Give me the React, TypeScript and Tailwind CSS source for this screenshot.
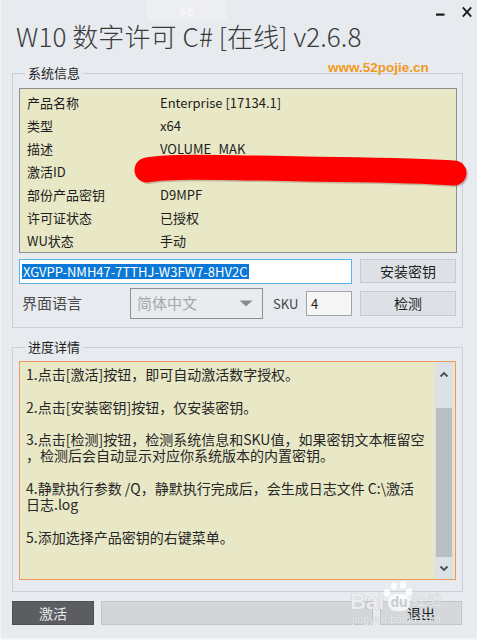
import React from "react";

const infoRows: [string, string][] = [
  ["产品名称", "Enterprise [17134.1]"],
  ["类型", "x64"],
  ["描述", "VOLUME_MAK"],
  ["激活ID", ""],
  ["部份产品密钥", "D9MPF"],
  ["许可证状态", "已授权"],
  ["WU状态", "手动"],
];

const helpLines = [
  "1.点击[激活]按钮，即可自动激活数字授权。",
  "",
  "2.点击[安装密钥]按钮，仅安装密钥。",
  "",
  "3.点击[检测]按钮，检测系统信息和SKU值，如果密钥文本框留空",
  "，检测后会自动显示对应你系统版本的内置密钥。",
  "",
  "4.静默执行参数 /Q，静默执行完成后，会生成日志文件 C:\\激活",
  "日志.log",
  "",
  "5.添加选择产品密钥的右键菜单。",
];

const Chevron = ({ up }: { up?: boolean }) => (
  <svg width="10" height="7" viewBox="0 0 10 7">
    <polyline
      points={up ? "1.5,5.5 5,2 8.5,5.5" : "1.5,1.5 5,5 8.5,1.5"}
      fill="none"
      stroke="#4a4d52"
      strokeWidth="1.8"
    />
  </svg>
);

const GroupBox = ({
  title,
  className,
  children,
}: {
  title: string;
  className?: string;
  children: React.ReactNode;
}) => (
  <fieldset className={`border border-[#ccd0d4] ${className ?? ""}`}>
    <legend className="ml-[6px] px-[3px] text-[13px] leading-[18px] text-[#1e1e1e]">
      {title}
    </legend>
    {children}
  </fieldset>
);

export default function App() {
  return (
    <div className="w-[477px] h-[640px] bg-[#f4f5f7] font-['Noto_Sans_CJK_SC',sans-serif]">
      <div className="relative ml-[1px] w-[476px] h-[638px] bg-[#e7eaee] overflow-hidden">
        {/* window controls */}
        <div className="h-[20px] flex justify-end items-start pr-[5px] gap-[17px]">
          <svg width="9" height="20" viewBox="0 0 9 20">
            <rect x="0" y="13.5" width="8.5" height="2.2" fill="#1a1a1a" />
          </svg>
          <svg width="10" height="20" viewBox="0 0 10 20">
            <path d="M0.8 7.3 L9.2 16.7 M9.2 7.3 L0.8 16.7" stroke="#1a1a1a" strokeWidth="1.8" />
          </svg>
        </div>

        <div className="pl-[11px] pr-[14px]">
          <div className="h-[32px] leading-[32px] ml-[4px] text-[26px] font-light tracking-[0.1px] text-[#3a3a3a] whitespace-nowrap">
            W10 数字许可 C# [在线] v2.6.8
          </div>

          <GroupBox title="系统信息" className="mt-[12px] pl-[6px] pr-[5px] pb-[8px]">
            <div className="mt-[6px] border border-[#8e8e8e] bg-[#e8e8c6] pt-[2px] pl-[7px]">
              {infoRows.map(([k, v]) => (
                <div key={k} className="h-[23px] flex items-center text-[13px] text-[#1c1c1c]">
                  <div className="w-[133px]">{k}</div>
                  <div>{v}</div>
                </div>
              ))}
            </div>

            <div className="mt-[6px] flex items-start gap-[8px]">
              <div className="w-[333px] h-[25px] border border-[#5fb3e6] bg-white flex items-center pl-[2px]">
                <span className="bg-[#0a78d6] text-white text-[13px] leading-[15px] px-[1px]">
                  XGVPP-NMH47-7TTHJ-W3FW7-8HV2C
                </span>
              </div>
              <button className="w-[96px] h-[24px] border border-[#c6cacf] bg-[#dde1e6] text-[14px] text-[#1e1e1e] flex items-center justify-center">
                安装密钥
              </button>
            </div>

            <div className="mt-[4px] h-[31px] flex items-center">
              <div className="w-[111px] pl-[3px] text-[15px] text-[#4a4a4a]">界面语言</div>
              <div className="w-[133px] h-[31px] border border-[#8f8f8f] bg-[#e9ecef] flex items-center justify-between pl-[6px] pr-[9px]">
                <span className="text-[15px] text-[#a6a6a6]">简体中文</span>
                <svg width="14" height="7" viewBox="0 0 14 7">
                  <polygon points="0.5,0.5 13.5,0.5 7,6.5" fill="#8a8b8d" />
                </svg>
              </div>
              <div className="w-[43px] pl-[10px] text-[13px] text-[#444]">SKU</div>
              <div className="w-[46px] h-[25px] border border-[#a3a3a3] bg-[#f6f6f6] flex items-center pl-[4px] text-[13px] text-[#1e1e1e]">
                4
              </div>
              <button className="ml-[8px] w-[96px] h-[25px] border border-[#c6cacf] bg-[#dde1e6] text-[14px] text-[#1e1e1e] flex items-center justify-center">
                检测
              </button>
            </div>
          </GroupBox>

          <GroupBox title="进度详情" className="mt-[10px] pl-[6px] pr-[6px] pb-[11px]">
            <div className="mt-[5px] h-[219px] border border-[#ee9a5e] bg-[#e8e8c6] flex">
              <div className="flex-1 pl-[6px] pt-[4px] text-[14px] leading-[16.3px] text-[#262626] whitespace-pre">
                {helpLines.map((l, i) => (
                  <div key={i} className="h-[16.3px]">
                    {l}
                  </div>
                ))}
              </div>
              <div className="w-[18px] mr-[2px] bg-[#dce1e5] flex flex-col">
                <div className="h-[24px] flex items-center justify-center">
                  <Chevron up />
                </div>
                <div className="h-[22px]" />
                <div className="h-[149px] mx-[1px] bg-[#b9bec3]" />
                <div className="flex-1 h-[22px] flex items-center justify-center">
                  <Chevron />
                </div>
              </div>
            </div>
          </GroupBox>

          <div className="mt-[9px] h-[24px] flex gap-[7px]">
            <button className="w-[82px] h-[24px] bg-[#5c5d61] border border-[#4f5054] text-[14px] text-[#e6e8ea] flex items-center justify-center">
              激活
            </button>
            <div className="w-[272px] h-[24px] bg-[#d3d6d9] border border-[#c3c6c9]" />
            <button className="w-[82px] h-[24px] bg-[#d5d8db] border border-[#c3c6c9] text-[14px] text-[#222] flex items-center justify-center">
              退出
            </button>
          </div>
        </div>

        {/* overlays: faint top artifact, watermarks, redaction scribble */}
        <div className="absolute left-[146px] top-0 w-[80px] h-[20px] bg-[#eceef1] flex items-center justify-center text-[15px] font-bold text-[#f6f7f8]">
          se
        </div>
        <div className="absolute left-[327px] top-[60px] text-[13.5px] leading-[16px] font-bold font-['Liberation_Sans',sans-serif] text-[#f29a22]">
          www.52pojie.cn
        </div>
        <svg
          className="absolute left-[124px] top-[149px]"
          width="352"
          height="44"
          viewBox="0 0 352 44"
        >
          <path
            d="M22 21 C 50 16, 110 19, 180 20 S 290 21, 329 24"
            fill="none"
            stroke="#5a2020"
            strokeOpacity="0.25"
            strokeWidth="25"
            strokeLinecap="round"
            transform="translate(1.5,1.5)"
          />
          <path
            d="M22 21 C 50 16, 110 19, 180 20 S 290 21, 329 24"
            fill="none"
            stroke="#ff0000"
            strokeWidth="25"
            strokeLinecap="round"
          />
        </svg>
        <div className="absolute left-[347px] top-[578px] w-[104px] h-[50px] text-white/80">
          <svg className="absolute left-[34px] top-[2px]" width="32" height="30" viewBox="0 0 32 30">
            <ellipse cx="5" cy="13" rx="3.2" ry="4" fill="#ffffff" fillOpacity="0.8" />
            <ellipse cx="12" cy="6" rx="3.2" ry="4" fill="#ffffff" fillOpacity="0.8" />
            <ellipse cx="21" cy="5" rx="3.2" ry="4" fill="#ffffff" fillOpacity="0.8" />
            <ellipse cx="27" cy="12" rx="3.2" ry="4" fill="#ffffff" fillOpacity="0.8" />
          </svg>
          <div className="absolute left-[2px] top-[13px] text-[22px] leading-[22px] font-bold font-['Liberation_Sans',sans-serif] [text-shadow:0_0_1px_#9aa0a6]">
            Bai
          </div>
          <div className="absolute left-[40px] top-[16px] w-[22px] h-[17px] rounded-[8px] bg-white/75 text-[14px] leading-[16px] font-bold text-[#c7ccd1] text-center font-['Liberation_Sans',sans-serif]">
            du
          </div>
          <div className="absolute left-[64px] top-[13px] text-[15px] leading-[16px] [text-shadow:0_0_1px_#9aa0a6]">
            经验
          </div>
          <div className="absolute left-[4px] top-[35px] text-[11px] leading-[12px] font-['Liberation_Sans',sans-serif] [text-shadow:0_0_1px_#9aa0a6]">
            jingyan.baidu.com
          </div>
        </div>
      </div>
    </div>
  );
}
